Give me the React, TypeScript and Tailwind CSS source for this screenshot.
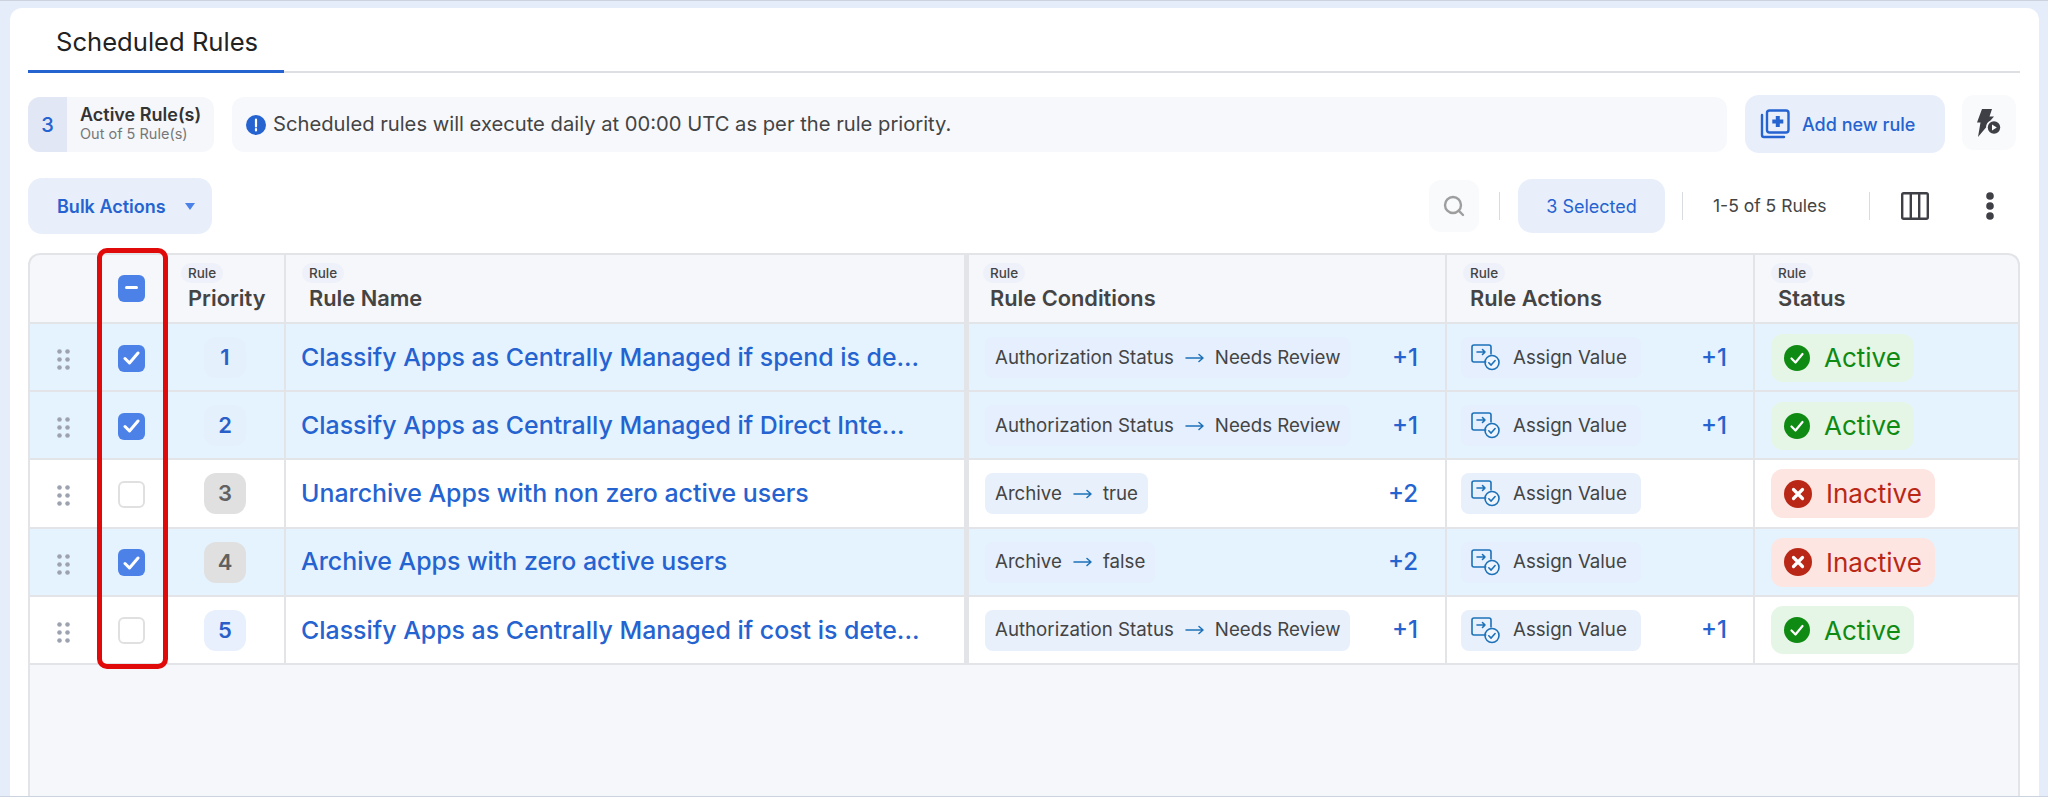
import { Search } from 'lucide-react'

const GRID = 'grid grid-cols-[67px_69px_120px_678px_5px_478px_308px_1fr]'

type Rule = {
  id: number
  selected: boolean
  name: string
  cond: [string, string]
  condMore: number
  actionMore: number
  active: boolean
}

const RULES: Rule[] = [
  { id: 1, selected: true, name: 'Classify Apps as Centrally Managed if spend is de...', cond: ['Authorization Status', 'Needs Review'], condMore: 1, actionMore: 1, active: true },
  { id: 2, selected: true, name: 'Classify Apps as Centrally Managed if Direct Inte...', cond: ['Authorization Status', 'Needs Review'], condMore: 1, actionMore: 1, active: true },
  { id: 3, selected: false, name: 'Unarchive Apps with non zero active users', cond: ['Archive', 'true'], condMore: 2, actionMore: 0, active: false },
  { id: 4, selected: true, name: 'Archive Apps with zero active users', cond: ['Archive', 'false'], condMore: 2, actionMore: 0, active: false },
  { id: 5, selected: false, name: 'Classify Apps as Centrally Managed if cost is dete...', cond: ['Authorization Status', 'Needs Review'], condMore: 1, actionMore: 1, active: true },
]

/* ── Icons ── */
function AddIcon() {
  return (
    <svg width="30" height="30" viewBox="0 0 30 30" fill="none">
      <path d="M2 6v20a2 2 0 0 0 2 2h20" stroke="#2563d0" strokeWidth="2.4" strokeLinecap="round" />
      <rect x="7" y="1.5" width="21.5" height="22" rx="2.5" stroke="#2563d0" strokeWidth="2.4" />
      <path d="M17.8 7v11M12.3 12.5h11" stroke="#2563d0" strokeWidth="4" />
    </svg>
  )
}

function BoltPlayIcon() {
  return (
    <svg width="26" height="30" viewBox="0 0 26 30" fill="none">
      <path d="M6 1h10l-2.5 7.5H18l-3.5 4a8 8 0 0 0-4.5 7L2 29l2.5-14.5H1z" fill="#3f3f46" />
      <circle cx="18" cy="19.5" r="6.2" fill="#3f3f46" />
      <path d="M16 16.5v6l4.8-3z" fill="#fff" />
    </svg>
  )
}

function ColumnsIcon() {
  return (
    <svg width="28" height="28" viewBox="0 0 28 28" fill="none" stroke="#3f3f46" strokeWidth="2.4">
      <rect x="1.2" y="1.2" width="25.6" height="25.6" rx="1.5" />
      <path d="M9.8 1v26M18.2 1v26" />
    </svg>
  )
}

function DotsIcon() {
  return (
    <svg width="8" height="28" viewBox="0 0 8 28" fill="#3f3f46">
      <circle cx="4" cy="4" r="3.8" />
      <circle cx="4" cy="14" r="3.8" />
      <circle cx="4" cy="24" r="3.8" />
    </svg>
  )
}

function GripIcon() {
  return (
    <svg width="13" height="21" viewBox="0 0 13 21" fill="#9ca3af">
      <circle cx="2.5" cy="2.5" r="2.3" />
      <circle cx="10.5" cy="2.5" r="2.3" />
      <circle cx="2.5" cy="10.5" r="2.3" />
      <circle cx="10.5" cy="10.5" r="2.3" />
      <circle cx="2.5" cy="18.5" r="2.3" />
      <circle cx="10.5" cy="18.5" r="2.3" />
    </svg>
  )
}

function AssignIcon() {
  return (
    <svg width="29" height="27" viewBox="0 0 29 27" fill="none" stroke="#1d71b8" strokeWidth="1.6" strokeLinecap="round" strokeLinejoin="round">
      <path d="M15 18H3a2 2 0 0 1-2-2V3a2 2 0 0 1 2-2h15a2 2 0 0 1 2 2v7" />
      <path d="M6 8h8M11.5 5.5 14 8l-2.5 2.5" />
      <circle cx="21" cy="18.5" r="7" fill="#fff" fillOpacity="0.4" />
      <path d="m17.8 18.8 2.3 2.3 4-4.6" />
    </svg>
  )
}

function ArrowIcon() {
  return (
    <svg width="19" height="10" viewBox="0 0 19 10" fill="none" stroke="#1d71b8" strokeWidth="1.5" strokeLinecap="round" strokeLinejoin="round">
      <path d="M1 5h17M14 1.5 18 5l-4 3.5" />
    </svg>
  )
}

function StatusIcon({ active }: { active: boolean }) {
  if (active) {
    return (
      <svg width="26" height="26" viewBox="0 0 26 26">
        <circle cx="13" cy="13" r="13" fill="#0f8a12" />
        <path d="m7.5 13.5 4 4 7-8.5" fill="none" stroke="#fff" strokeWidth="2.2" strokeLinecap="round" strokeLinejoin="round" />
      </svg>
    )
  }
  return (
    <svg width="28" height="28" viewBox="0 0 28 28">
      <circle cx="14" cy="14" r="14" fill="#b92817" />
      <path d="m9.5 9.5 9 9M18.5 9.5l-9 9" fill="none" stroke="#fff" strokeWidth="3.2" strokeLinecap="round" />
    </svg>
  )
}

function Divider() {
  return <div className="w-px h-[28px] bg-[#d8dbe0]" />
}

function Checkbox({ state }: { state: 'on' | 'off' | 'mixed' }) {
  if (state === 'off') {
    return <div className="w-[27px] h-[27px] rounded-[6px] border-2 border-[#e0e0e0] bg-white" />
  }
  return (
    <div className="w-[27px] h-[27px] rounded-[6px] bg-[#4c82e8] flex items-center justify-center">
      {state === 'on' ? (
        <svg width="17" height="14" viewBox="0 0 17 14" fill="none" stroke="#fff" strokeWidth="3" strokeLinecap="round" strokeLinejoin="round">
          <path d="m2 7.5 4.5 4.5L15 2" />
        </svg>
      ) : (
        <div className="w-[13px] h-[3px] rounded-full bg-white -mt-[3px]" />
      )}
    </div>
  )
}

function HeadCell({ title, className }: { title: string; className: string }) {
  return (
    <div className={`flex flex-col items-start pt-[8px] ${className}`}>
      <span className="h-[20px] -ml-[7px] px-[7px] rounded-full bg-[#eef1f9] text-[13.5px] leading-[20px] font-medium text-[#444]">Rule</span>
      <span className="text-[21.8px] leading-[28px] mt-[1px] font-semibold text-[#444] whitespace-nowrap">{title}</span>
    </div>
  )
}

function More({ n }: { n: number }) {
  return <span className="text-[24px] font-medium text-[#2563d0]">+{n}</span>
}

function RuleRow({ rule }: { rule: Rule }) {
  const cellBorder = 'border-r-2 border-[#e2e4e8]'
  const priorityClass = rule.id === 3 || rule.id === 4
    ? 'bg-[#e0e0e0] text-[#616161]'
    : rule.selected ? 'bg-[#e5f0fd] text-[#2a5fc8]' : 'bg-[#e8f0fd] text-[#2a5fc8]'
  const chipBg = rule.selected ? 'bg-[#e5effd]' : 'bg-[#e8f0fc]'
  return (
    <div className={`${GRID} h-[68.2px] border-b-2 border-[#e2e4e8] ${rule.selected ? 'bg-[#e5f3fe]' : 'bg-white'}`}>
      <div className="flex items-center justify-center pt-[5px]"><GripIcon /></div>
      <div className="flex items-center justify-center pt-[2px]"><Checkbox state={rule.selected ? 'on' : 'off'} /></div>
      <div className={`flex items-center justify-center pt-[1px] ${cellBorder}`}>
        <span className={`w-[42px] h-[41px] rounded-[12px] flex items-center justify-center text-[22px] font-semibold ${priorityClass}`}>{rule.id}</span>
      </div>
      <div className="flex items-center pl-[15px] pt-[1px] text-[24.9px] font-medium text-[#2563d0] whitespace-nowrap overflow-hidden">{rule.name}</div>
      <div className="bg-[#e2e4e8]" />
      <div className={`flex items-center justify-between pl-[16px] pr-[27px] pt-[1px] ${cellBorder}`}>
        <span className={`h-[41px] rounded-[8px] px-[10px] flex items-center gap-[11px] text-[18.7px] text-[#444] ${chipBg}`}>
          {rule.cond[0]}
          <ArrowIcon />
          {rule.cond[1]}
        </span>
        <More n={rule.condMore} />
      </div>
      <div className={`flex items-center justify-between pl-[14px] pr-[26px] pt-[1px] ${cellBorder}`}>
        <span className={`w-[180px] h-[41px] rounded-[8px] pl-[10px] flex items-center gap-[13px] text-[18.7px] text-[#444] whitespace-nowrap ${chipBg}`}>
          <AssignIcon />
          Assign Value
        </span>
        {rule.actionMore > 0 && <More n={rule.actionMore} />}
      </div>
      <div className="flex items-center pl-[16px] pt-[1px]">
        <span className={`rounded-[12px] flex items-center gap-[14px] text-[26px] ${rule.active ? 'h-[48px] px-[13px] bg-[#e6f6e6] text-[#0f8a12]' : 'h-[49px] px-[13px] bg-[#fde5e2] text-[#b92817]'}`}>
          <StatusIcon active={rule.active} />
          {rule.active ? 'Active' : 'Inactive'}
        </span>
      </div>
    </div>
  )
}

export default function App() {
  return (
    <div className="h-[797px] overflow-hidden bg-[#e6edfa] border-y border-[#cdd3de] pl-[10px] pr-[9px] pt-[7px] font-['Inter',sans-serif]">
      <div className="h-full bg-white rounded-t-[12px] pl-[18px] pr-[19px]">
        {/* Tabs */}
        <div className="h-[65px] border-b-2 border-[#dedfe3] relative">
          <div className="w-[256px] h-[65px] pt-[19px] pl-[28px] text-[25.6px] leading-[30px] text-[#222] border-b-[3px] border-[#2563d0]">Scheduled Rules</div>
        </div>

        {/* Summary row */}
        <div className="flex items-start mt-[22px] h-[58px]">
          <div className="w-[186px] h-[55px] mt-[2px] rounded-[12px] bg-[#f5f7fb] flex overflow-hidden">
            <div className="w-[39px] bg-[#e1e7f5] flex items-center justify-center text-[20px] font-medium text-[#2563d0]">3</div>
            <div className="pl-[13px] pt-[7px]">
              <div className="text-[18px] leading-[22px] font-semibold text-[#333] whitespace-nowrap">Active Rule(s)</div>
              <div className="text-[14.5px] leading-[16px] text-[#777] whitespace-nowrap">Out of 5 Rule(s)</div>
            </div>
          </div>
          <div className="ml-[18px] w-[1495px] h-[55px] mt-[2px] rounded-[12px] bg-[#f7f8fc] flex items-center pl-[14px] gap-[7px] text-[20.2px] text-[#444]">
            <svg width="20" height="20" viewBox="0 0 20 20">
              <circle cx="10" cy="10" r="10" fill="#2563d0" />
              <path d="M10 4.5v7M10 14v1.5" stroke="#fff" strokeWidth="2.2" strokeLinecap="round" />
            </svg>
            Scheduled rules will execute daily at 00:00 UTC as per the rule priority.
          </div>
          <div className="ml-[18px] w-[200px] h-[58px] rounded-[14px] bg-[#e8effb] flex items-center pl-[15px] gap-[12px] text-[18px] font-medium text-[#2563d0]">
            <AddIcon />
            Add new rule
          </div>
          <div className="ml-[17px] w-[54px] h-[55px] rounded-[12px] bg-[#f9fafc] flex items-center justify-center">
            <BoltPlayIcon />
          </div>
        </div>

        {/* Toolbar */}
        <div className="flex items-center mt-[25px] h-[56px]">
          <div className="w-[184px] h-[56px] rounded-[14px] bg-[#e8effb] flex items-center pl-[29px] text-[18px] font-semibold text-[#2563d0]">
            Bulk Actions
            <svg className="ml-[19px]" width="10" height="7" viewBox="0 0 10 7"><path d="M0 0h10L5 7z" fill="#4c82e8" /></svg>
          </div>
          <div className="ml-auto w-[50px] h-[52px] rounded-[12px] bg-[#f9fafc] flex items-center justify-center">
            <Search size={24} color="#9e9e9e" strokeWidth={2.4} />
          </div>
          <div className="ml-[20px]"><Divider /></div>
          <div className="ml-[18px] w-[147px] h-[54px] rounded-[14px] bg-[#e8effb] flex items-center justify-center text-[18px] text-[#2563d0]">3 Selected</div>
          <div className="ml-[17px]"><Divider /></div>
          <div className="ml-[30px] w-[114px] text-[17.5px] text-[#444] whitespace-nowrap">1-5 of 5 Rules</div>
          <div className="ml-[42px]"><Divider /></div>
          <div className="ml-[31px]"><ColumnsIcon /></div>
          <div className="ml-[57px] mr-[26px]"><DotsIcon /></div>
        </div>

        {/* Table */}
        <div className="relative mt-[19px] h-[600px] rounded-t-[12px] border-x-2 border-t-2 border-[#e2e4e8] bg-[#f5f7fb]">
          <div className={`${GRID} h-[69px] border-b-2 border-[#e2e4e8]`}>
            <div />
            <div className="flex items-center justify-center"><Checkbox state="mixed" /></div>
            <HeadCell title="Priority" className="pl-[22px] border-r-2 border-[#e2e4e8]" />
            <HeadCell title="Rule Name" className="pl-[23px]" />
            <div className="bg-[#e2e4e8]" />
            <HeadCell title="Rule Conditions" className="pl-[21px] border-r-2 border-[#e2e4e8]" />
            <HeadCell title="Rule Actions" className="pl-[23px] border-r-2 border-[#e2e4e8]" />
            <HeadCell title="Status" className="pl-[23px]" />
          </div>
          {RULES.map(r => <RuleRow key={r.id} rule={r} />)}
          {/* red highlight over the checkbox column */}
          <div className="absolute left-[67px] -top-[7px] w-[71px] h-[421px] rounded-[10px] border-[5px] border-[#e00a0a]" />
        </div>
      </div>
    </div>
  )
}
